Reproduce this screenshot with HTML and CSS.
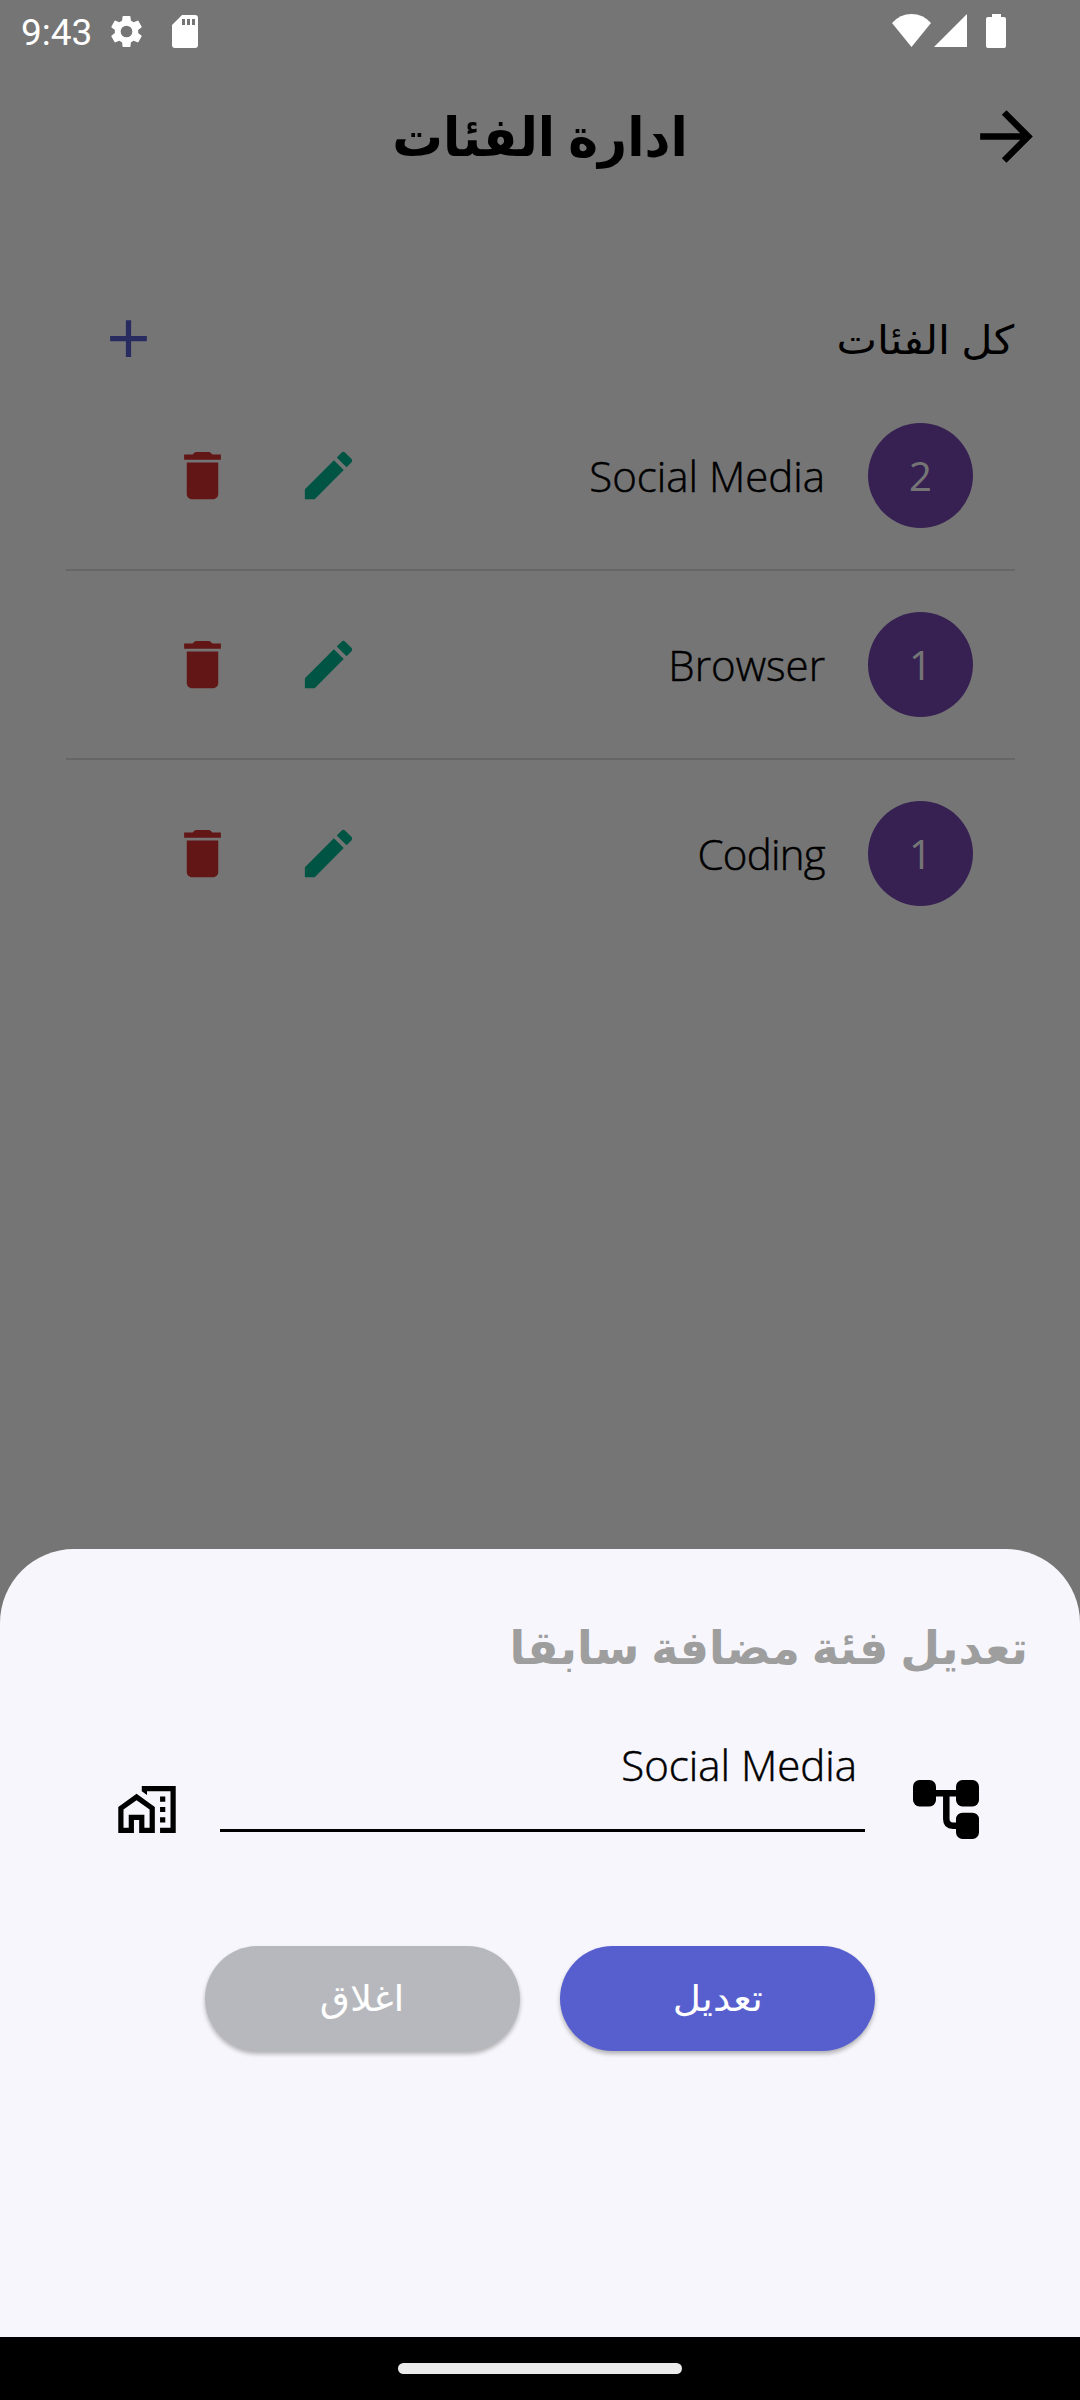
FILE: index.html
```html
<!DOCTYPE html>
<html lang="ar" dir="rtl">
<head>
<meta charset="utf-8">
<title>ادارة الفئات</title>
<link rel="stylesheet" href="styles.css">
</head>
<body>
<svg class="defs" width="0" height="0" aria-hidden="true">
  <symbol id="edit" viewBox="0 0 24 24"><path d="M3 17.250V21h3.750L17.810 9.940l-3.750-3.750L3 17.250zM20.710 7.040c.39-.39.39-1.020 0-1.410l-2.340-2.340c-.39-.39-1.020-.39-1.410 0l-1.830 1.830 3.750 3.750 1.830-1.830z"/></symbol>
  <symbol id="trash" viewBox="0 0 24 24"><path d="M6 19c0 1.100.9 2 2 2h8c1.100 0 2-.9 2-2V7H6v12zM19 4h-3.200l-.7-.7c-.2-.2-.4-.3-.7-.3H9.600c-.3 0-.5.1-.7.3l-.7.7H5v2h14V4z"/></symbol>
</svg>
<div class="screen">
  <main class="page">
    <header class="appbar">
      <svg class="back" viewBox="0 0 24 24"><path d="M12 4l-1.410 1.410L16.170 11H4v2h12.170l-5.580 5.590L12 20l8-8z"/></svg>
      <h1 class="title"><span class="fit fit-title">ادارة الفئات</span></h1>
    </header>
    <section class="list-head">
      <h2 class="subtitle"><span class="fit fit-sub">كل الفئات</span></h2>
      <svg class="icon add" viewBox="0 0 24 24"><path d="M19 13h-6v6h-2v-6H5v-2h6V5h2v6h6v2z"/></svg>
    </section>
    <ul class="list">
      <li class="row"><span class="count">2</span><span class="name">Social Media</span><svg class="icon edit"><use href="#edit"/></svg><svg class="icon trash"><use href="#trash"/></svg></li>
      <li class="row"><span class="count">1</span><span class="name">Browser</span><svg class="icon edit"><use href="#edit"/></svg><svg class="icon trash"><use href="#trash"/></svg></li>
      <li class="row"><span class="count">1</span><span class="name snug">Coding</span><svg class="icon edit"><use href="#edit"/></svg><svg class="icon trash"><use href="#trash"/></svg></li>
    </ul>
  </main>
  <div class="scrim"></div>
  <div class="statusbar" dir="ltr">
    <span class="time">9:43</span>
    <svg class="gear" viewBox="0 0 24 24"><path d="M19.140 12.940c.04-.3.06-.61.06-.94s-.02-.64-.07-.94l2.030-1.580c.18-.14.23-.41.12-.61l-1.920-3.320c-.12-.22-.37-.29-.59-.22l-2.390.96c-.5-.38-1.030-.7-1.620-.94L14.400 2.810c-.04-.24-.24-.41-.48-.41h-3.840c-.24 0-.43.17-.47.41L9.250 5.350c-.59.24-1.130.57-1.620.94l-2.390-.96c-.22-.08-.47 0-.59.22L2.740 8.870c-.12.21-.08.47.12.61l2.030 1.580c-.05.3-.09.63-.09.94s.02.64.07.94l-2.030 1.580c-.18.14-.23.41-.12.61l1.920 3.320c.12.22.37.29.59.22l2.390-.96c.5.38 1.030.7 1.620.94l.36 2.540c.05.24.24.41.48.41h3.840c.24 0 .44-.17.47-.41l.36-2.540c.59-.24 1.130-.56 1.620-.94l2.390.96c.22.08.47 0 .59-.22l1.920-3.320c.12-.22.07-.47-.12-.61l-2.010-1.580zM12 15.600A3.600 3.600 0 1 1 12 8.400a3.600 3.600 0 0 1 0 7.200z"/></svg>
    <svg class="sd" viewBox="0 0 26 33"><path fill-rule="evenodd" d="M10 0h13a3 3 0 0 1 3 3v27a3 3 0 0 1-3 3H3a3 3 0 0 1-3-3V10zM10 4v6h3V4zm5 0v6h3V4zm5 0v6h3V4z"/></svg>
    <svg class="wifi" viewBox="0 0 39 33"><path d="M0 9Q8 0 19.500 0T39 9L19.500 33z"/></svg>
    <svg class="cell" viewBox="0 0 33 33"><path d="M33 0v33H0z"/></svg>
    <svg class="battery" viewBox="0 0 20 34"><path d="M6 0h9v3h3q2 0 2 2v27q0 2-2 2H2q-2 0-2-2V5q0-2 2-2h4z"/></svg>
  </div>
  <section class="sheet">
    <h2 class="sheet-title"><span class="fit fit-sheet">تعديل فئة مضافة سابقا</span></h2>
    <div class="field">
      <svg class="tree" viewBox="0 0 66 59"><rect width="23" height="26.500" rx="6.500"/><rect x="43" width="23" height="26.500" rx="6.500"/><rect x="43" y="32.700" width="23" height="26.300" rx="6.500"/><path d="M22 13.200h22M33.300 13.200V39q0 6.700 6.700 6.700h4" fill="none" stroke="#000" stroke-width="6.500"/></svg>
      <div class="input"><span class="value">Social Media</span></div>
      <svg class="home" viewBox="1 3 22 18"><path d="M1 11v10h6v-5h2v5h6V11L8 6l-7 5zm12 8h-2v-5H5v5H3v-7l5-3.500 5 3.500v7zM17 7h2v2h-2zM17 11h2v2h-2zM17 15h2v2h-2zM10 3v1.970l2 1.430V5h9v14h-4v2h6V3z"/></svg>
    </div>
    <div class="actions">
      <button class="btn primary"><span class="fit fit-btn">تعديل</span></button>
      <button class="btn"><span class="fit fit-btn">اغلاق</span></button>
    </div>
  </section>
  <div class="navbar"><span class="pill"></span></div>
</div>
</body>
</html>
```
FILE: styles.css
```css
* { box-sizing: border-box; }
body { margin: 0; font-family: "Open Sans", "DejaVu Sans", sans-serif; color: #000; }
h1, h2, ul { margin: 0; padding: 0; }
svg { display: block; flex: none; }
.defs { position: absolute; }
.screen { position: relative; width: 1080px; height: 2400px; overflow: hidden; background: #fff; }

.page { padding-top: 63px; }
.appbar { display: grid; grid-template-columns: 147px 1fr 147px; align-items: center; height: 147px; }
.back { width: 79px; height: 79px; justify-self: center; }
.title { text-align: center; font-size: 54px; font-weight: 700; line-height: 80px; margin-top: -3px; }
.fit { display: inline-block; white-space: nowrap; }
.fit-title { transform: scaleX(0.935); }
.fit-sub { transform: scaleX(1.075); transform-origin: right; }
.fit-sheet { transform: scaleX(0.997); transform-origin: right; }
.fit-btn { transform: scaleX(1.08); }

.list-head { display: flex; justify-content: space-between; align-items: center; height: 84px; margin: 86.500px 66px 0; padding: 0 0 0 31px; }
.subtitle { font-size: 40px; font-weight: 400; line-height: 60px; }
.icon { width: 63px; height: 63px; }
.add { fill: #575fcf; }

.list { list-style: none; margin: 1.500px 65px 0 66px; }
.row { display: flex; align-items: center; height: 189px; padding-right: 42px; border-bottom: 2px solid #dedede; }
.row:last-child { border-color: transparent; }
.count { display: flex; align-items: center; justify-content: center; width: 105px; height: 105px; border-radius: 50%; background: #7648b3; color: #fff; font-size: 40px; }
.name { flex: 1; margin: -1px 43px 0 0; font-size: 42px; font-weight: 300; -webkit-text-stroke: 0.5px #000; }
.snug { letter-spacing: -0.7px; }
.edit { fill: #00b894; margin-left: 63px; }
.trash { fill: #d63031; margin-left: 105px; }

.scrim { position: absolute; inset: 0; background: rgba(0, 0, 0, 0.54); }

.statusbar { position: absolute; top: 0; left: 0; right: 0; display: flex; align-items: center; height: 63px; padding: 0 74px 0 21px; fill: #fff; }
.time { font: 400 37px/40px Roboto, sans-serif; color: #fff; width: 86px; margin-top: 3px; }
.gear { width: 39px; height: 39px; }
.sd { width: 26px; height: 33px; margin: 0 auto 0 26px; }
.wifi { width: 39px; height: 33px; margin: -2px 3px 0 0; }
.cell { width: 33px; height: 33px; margin: -2px 19px 0 0; }
.battery { width: 20px; height: 34px; margin-top: -1px; }

.sheet { position: absolute; top: 1549px; left: 0; right: 0; height: 788px; padding: 57px 52px 0; border-radius: 74px 74px 0 0; background: #f7f6fc; }
.sheet-title { font-size: 46px; font-weight: 700; line-height: 80px; color: #9e9e9e; }
.field { display: flex; align-items: center; height: 105px; margin-top: 69px; padding: 0 49px 0 66px; }
.tree { width: 66px; height: 59px; margin-top: 4px; }
.input { display: flex; align-items: flex-start; width: 645px; height: 97px; margin: -48px 48px 0 44px; padding-right: 8px; border-bottom: 3px solid #000; }
.value { font-size: 42px; font-weight: 300; line-height: 60px; -webkit-text-stroke: 0.5px #000; }
.home { width: 58px; height: 47px; margin-top: 4px; }
.actions { display: flex; justify-content: center; gap: 40px; margin-top: 86px; }
.btn { width: 315px; height: 105px; padding: 0; border: 0; border-radius: 53px; background: #b7b8bd; color: #fff; font: 400 36px/50px "DejaVu Sans", sans-serif; box-shadow: 0 3px 4px rgba(0, 0, 0, 0.28); }
.primary { background: #575fcf; }

.navbar { position: absolute; left: 0; right: 0; bottom: 0; display: flex; justify-content: center; align-items: center; height: 63px; background: #000; }
.pill { width: 284px; height: 11px; border-radius: 6px; background: #ebebeb; }
```
